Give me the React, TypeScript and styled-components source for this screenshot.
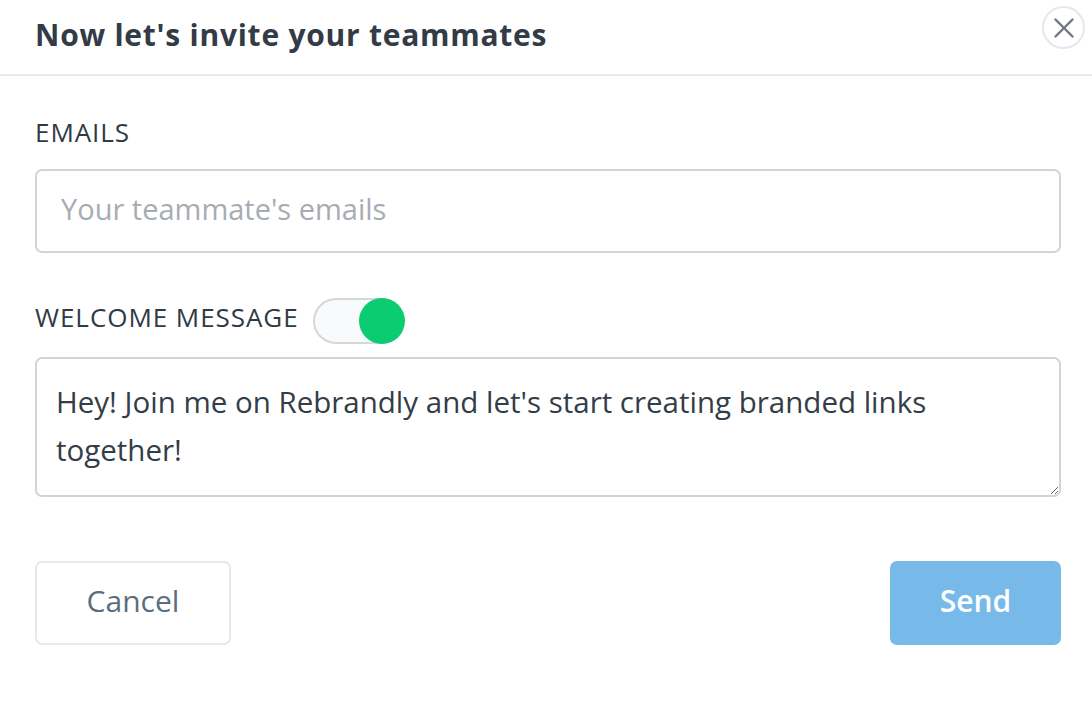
import React, { useState } from 'react';
import styled, { createGlobalStyle } from 'styled-components';

const GlobalStyle = createGlobalStyle`
  html, body {
    margin: 0;
    padding: 0;
    background: #ffffff;
  }
  body {
    font-family: 'Open Sans', 'Lato', sans-serif;
    color: #2f3a45;
  }
`;

const Modal = styled.div`
  width: 1092px;
  height: 710px;
  background: #fff;
  box-sizing: border-box;
`;

const Header = styled.header`
  height: 76px;
  box-sizing: border-box;
  border-bottom: 2px solid #e8ebee;
  display: flex;
  align-items: flex-start;
  justify-content: space-between;
  padding: 0 7px 0 35px;
`;

const Title = styled.h1`
  margin: 15px 0 0;
  font-size: 30px;
  line-height: 40px;
  font-weight: 700;
  color: #323b46;
  letter-spacing: 0.75px;
`;

const CloseButton = styled.button`
  margin-top: 6px;
  width: 43px;
  height: 43px;
  border-radius: 50%;
  border: 2px solid #e5e8eb;
  background: #fff;
  display: flex;
  align-items: center;
  justify-content: center;
  padding: 0;
  cursor: pointer;
`;

const Body = styled.div`
  padding: 41px 31px 0 35px;
  display: flex;
  flex-direction: column;
`;

const Label = styled.label`
  font-size: 26px;
  line-height: 30px;
  font-weight: 400;
  color: #2f3a45;
  letter-spacing: 0.95px;
  text-transform: uppercase;
`;

const LabelRow = styled.div`
  display: flex;
  align-items: flex-start;
  gap: 14px;
`;

const ToggleRow = styled(LabelRow)`
  margin-top: 45px;
  & > label {
    margin-top: 4px;
  }
`;

const TextInput = styled.input`
  margin-top: 22px;
  height: 84px;
  box-sizing: border-box;
  border: 2px solid #d0d5d9;
  border-radius: 7px;
  padding: 0 24px 6px;
  font-family: inherit;
  font-size: 29px;
  color: #333d48;
  outline: none;
  &::placeholder {
    color: #a7acb2;
  }
`;

const TextArea = styled.textarea`
  margin-top: 13px;
  height: 140px;
  box-sizing: border-box;
  border: 2px solid #d0d5d9;
  border-radius: 7px;
  padding: 19px 60px 19px 19px;
  font-family: inherit;
  font-size: 29.5px;
  line-height: 48px;
  color: #333d48;
  outline: none;
  resize: vertical;
`;

const Track = styled.button<{ $on: boolean }>`
  position: relative;
  width: 91px;
  height: 46px;
  border-radius: 23px;
  border: 2px solid #d3d8dc;
  background: #f9fafb;
  padding: 0;
  cursor: pointer;
  box-sizing: border-box;
`;

const Knob = styled.span<{ $on: boolean }>`
  position: absolute;
  top: -2px;
  left: ${(p) => (p.$on ? '44px' : '-2px')};
  width: 46px;
  height: 46px;
  border-radius: 50%;
  background: ${(p) => (p.$on ? '#0ccc71' : '#c5cbd0')};
`;

const Footer = styled.div`
  display: flex;
  justify-content: space-between;
  margin-top: 64px;
`;

const Button = styled.button<{ $primary?: boolean }>`
  height: 84px;
  box-sizing: border-box;
  border-radius: 7px;
  padding: 0 0 6px;
  font-family: inherit;
  font-size: 30px;
  cursor: pointer;
  border: 2px solid ${(p) => (p.$primary ? '#77bae9' : '#e6e9ec')};
  background: ${(p) => (p.$primary ? '#77bae9' : '#fff')};
  color: ${(p) => (p.$primary ? '#ffffff' : '#5c6d7e')};
  font-weight: ${(p) => (p.$primary ? 600 : 400)};
  width: ${(p) => (p.$primary ? '171px' : '196px')};
`;

const CloseIcon = () => (
  <svg width="20" height="20" viewBox="0 0 20 20" fill="none">
    <path d="M1.5 1.5 L18.5 18.5 M18.5 1.5 L1.5 18.5" stroke="#6e7783" strokeWidth="2.4" strokeLinecap="round" />
  </svg>
);

export default function App() {
  const [on, setOn] = useState(true);
  return (
    <>
      <GlobalStyle />
      <Modal>
        <Header>
          <Title>Now let's invite your teammates</Title>
          <CloseButton aria-label="Close">
            <CloseIcon />
          </CloseButton>
        </Header>
        <Body>
          <LabelRow>
            <Label>Emails</Label>
          </LabelRow>
          <TextInput placeholder="Your teammate's emails" />
          <ToggleRow>
            <Label>Welcome message</Label>
            <Track $on={on} onClick={() => setOn(!on)} aria-label="Toggle welcome message">
              <Knob $on={on} />
            </Track>
          </ToggleRow>
          <TextArea defaultValue="Hey! Join me on Rebrandly and let's start creating branded links together!" />
          <Footer>
            <Button>Cancel</Button>
            <Button $primary>Send</Button>
          </Footer>
        </Body>
      </Modal>
    </>
  );
}
